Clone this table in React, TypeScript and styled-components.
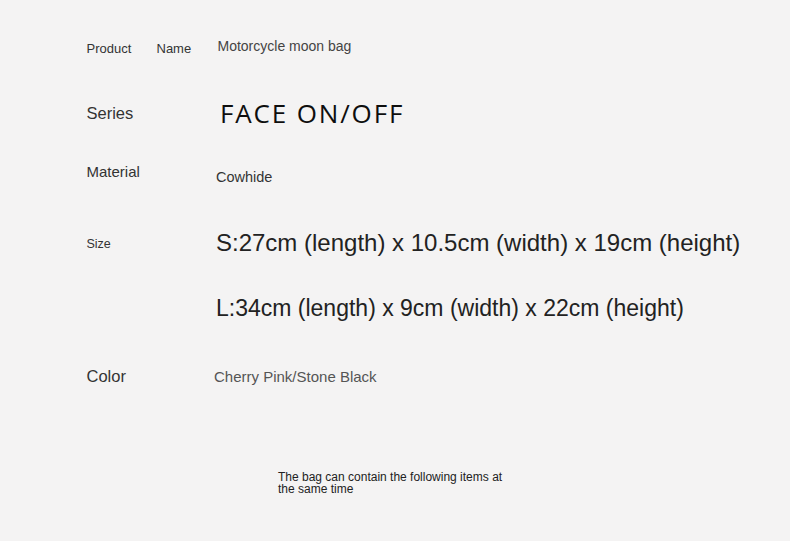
import styled, { createGlobalStyle } from "styled-components";

const GlobalStyle = createGlobalStyle`
  html, body {
    margin: 0;
    padding: 0;
    background: #f4f3f3;
  }
  body {
    font-family: "Liberation Sans", Arial, sans-serif;
    color: #222;
  }
`;

const Page = styled.div`
  width: 790px;
  height: 541px;
  box-sizing: border-box;
  padding-left: 86.5px;
  overflow: hidden;
  background: #f4f3f3;
`;

const Row = styled.div<{ $top: number }>`
  display: flex;
  align-items: flex-start;
  margin-top: ${(p) => p.$top}px;
`;

const Label = styled.div<{ $size: number; $width?: number; $lift?: number }>`
  flex: none;
  width: ${(p) => p.$width ?? 129.5}px;
  margin-top: ${(p) => p.$lift ?? 0}px;
  font-size: ${(p) => p.$size}px;
  line-height: 1;
  color: #333;
  white-space: nowrap;
`;

const Value = styled.div<{ $size: number; $lift?: number; $shift?: number; $color?: string }>`
  margin-top: ${(p) => p.$lift ?? 0}px;
  margin-left: ${(p) => p.$shift ?? 0}px;
  font-size: ${(p) => p.$size}px;
  line-height: 1;
  color: ${(p) => p.$color ?? "#222"};
  white-space: nowrap;
`;

const SeriesName = styled.div`
  margin-left: 4px;
  font-family: "Open Sans", "Noto Sans", sans-serif;
  font-size: 26px;
  line-height: 1;
  letter-spacing: 1.85px;
  color: #0e0e0e;
  white-space: nowrap;
`;

const Note = styled.p`
  margin: 86.5px 0 0 191.5px;
  width: 232px;
  font-size: 12px;
  line-height: 12px;
  color: #222;
`;

export default function App() {
  return (
    <>
      <GlobalStyle />
      <Page>
        <Row $top={39.4}>
          <Label $size={13} $width={70} $lift={3}>
            Product
          </Label>
          <Label $size={13} $width={61} $lift={3}>
            Name
          </Label>
          <Value $size={14} $color="#444">
            Motorcycle moon bag
          </Value>
        </Row>

        <Row $top={44.9}>
          <Label $size={16.5} $lift={5}>
            Series
          </Label>
          <SeriesName>FACE ON/OFF</SeriesName>
        </Row>

        <Row $top={37.8}>
          <Label $size={15}>Material</Label>
          <Value $size={14.5} $lift={6.4} $color="#333">
            Cowhide
          </Value>
        </Row>

        <Row $top={46.5}>
          <Label $size={12.5} $lift={7}>
            Size
          </Label>
          <Value $size={24}>S:27cm (length) x 10.5cm (width) x 19cm (height)</Value>
        </Row>

        <Row $top={41.8}>
          <Label $size={12.5} />
          <Value $size={23}>L:34cm (length) x 9cm (width) x 22cm (height)</Value>
        </Row>

        <Row $top={48}>
          <Label $size={16.5}>Color</Label>
          <Value $size={15} $shift={-2} $lift={0.5} $color="#555">
            Cherry Pink/Stone Black
          </Value>
        </Row>

        <Note>The bag can contain the following items at the same time</Note>
      </Page>
    </>
  );
}
